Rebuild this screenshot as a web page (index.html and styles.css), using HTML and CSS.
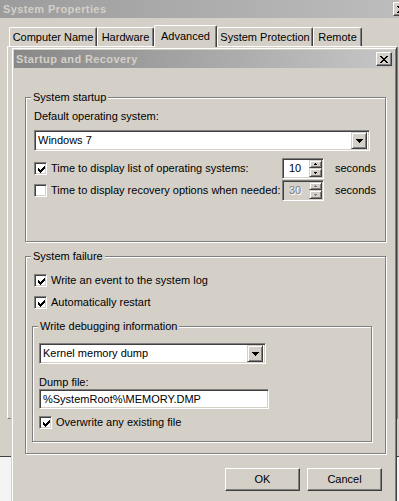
FILE: index.html
```html
<!DOCTYPE html>
<html lang="en">
<head>
  <meta charset="UTF-8" />
  <title>Startup and Recovery</title>
  <link rel="stylesheet" href="styles.css">
</head>
<body>
<div class="desktop">

  <div class="window back">
    <div class="caption">
      <span class="caption-text">System Properties</span>
      <span class="cap-btn">
        <svg width="8" height="7" viewBox="0 0 8 7"><path d="M0 0h2v1H0zM6 0h2v1H6zM1 1h2v1H1zM5 1h2v1H5zM2 2h4v1H2zM3 3h2v1H3zM2 4h4v1H2zM1 5h2v1H1zM5 5h2v1H5zM0 6h2v1H0zM6 6h2v1H6z"/></svg>
      </span>
    </div>
    <div class="tabs">
      <div class="tab tab-name">Computer Name</div>
      <div class="tab tab-hw">Hardware</div>
      <div class="tab tab-adv selected">Advanced</div>
      <div class="tab tab-sp">System Protection</div>
      <div class="tab tab-remote">Remote</div>
    </div>
    <div class="tabpanel"></div>
  </div>

  <div class="window dialog">
    <div class="caption">
      <span class="caption-text">Startup and Recovery</span>
      <span class="cap-btn">
        <svg width="8" height="7" viewBox="0 0 8 7"><path d="M0 0h2v1H0zM6 0h2v1H6zM1 1h2v1H1zM5 1h2v1H5zM2 2h4v1H2zM3 3h2v1H3zM2 4h4v1H2zM1 5h2v1H1zM5 5h2v1H5zM0 6h2v1H0zM6 6h2v1H6z"/></svg>
      </span>
    </div>

    <div class="client">
      <div class="group">
        <div class="group-title">System startup</div>
        <div class="label">Default operating system:</div>
        <div class="combo combo-os">
          <span class="combo-value">Windows 7</span>
          <span class="drop-btn"><svg width="7" height="4" viewBox="0 0 7 4"><path d="M0 0h7v1H0zM1 1h5v1H1zM2 2h3v1H2zM3 3h1v1H3z"/></svg></span>
        </div>
        <div class="opt-row first">
          <span class="check"><svg width="7" height="7" viewBox="0 0 7 7"><path d="M0 2h1v3H0zM1 3h1v3H1zM2 4h1v3H2zM3 3h1v3H3zM4 2h1v3H4zM5 1h1v3H5zM6 0h1v3H6z"/></svg></span>
          <span class="opt-label">Time to display list of operating systems:</span>
          <div class="spin">
            <span class="spin-value">10</span>
            <span class="spin-btns">
              <span class="spin-btn"><svg width="3" height="2" viewBox="0 0 3 2"><path d="M1 0h1v1H1zM0 1h3v1H0z"/></svg></span>
              <span class="spin-btn"><svg width="3" height="2" viewBox="0 0 3 2"><path d="M0 0h3v1H0zM1 1h1v1H1z"/></svg></span>
            </span>
          </div>
          <span class="unit">seconds</span>
        </div>
        <div class="opt-row">
          <span class="check"></span>
          <span class="opt-label">Time to display recovery options when needed:</span>
          <div class="spin disabled">
            <span class="spin-value">30</span>
            <span class="spin-btns">
              <span class="spin-btn"><svg width="3" height="2" viewBox="0 0 3 2"><path d="M1 0h1v1H1zM0 1h3v1H0z"/></svg></span>
              <span class="spin-btn"><svg width="3" height="2" viewBox="0 0 3 2"><path d="M0 0h3v1H0zM1 1h1v1H1z"/></svg></span>
            </span>
          </div>
          <span class="unit">seconds</span>
        </div>
      </div>

      <div class="group failure">
        <div class="group-title">System failure</div>
        <div class="opt-row first">
          <span class="check"><svg width="7" height="7" viewBox="0 0 7 7"><path d="M0 2h1v3H0zM1 3h1v3H1zM2 4h1v3H2zM3 3h1v3H3zM4 2h1v3H4zM5 1h1v3H5zM6 0h1v3H6z"/></svg></span>
          <span>Write an event to the system log</span>
        </div>
        <div class="opt-row">
          <span class="check"><svg width="7" height="7" viewBox="0 0 7 7"><path d="M0 2h1v3H0zM1 3h1v3H1zM2 4h1v3H2zM3 3h1v3H3zM4 2h1v3H4zM5 1h1v3H5zM6 0h1v3H6z"/></svg></span>
          <span>Automatically restart</span>
        </div>

        <div class="group inner">
          <div class="group-title">Write debugging information</div>
          <div class="combo combo-dump">
            <span class="combo-value">Kernel memory dump</span>
            <span class="drop-btn"><svg width="7" height="4" viewBox="0 0 7 4"><path d="M0 0h7v1H0zM1 1h5v1H1zM2 2h3v1H2zM3 3h1v1H3z"/></svg></span>
          </div>
          <div class="label dump-label">Dump file:</div>
          <div class="field">%SystemRoot%\MEMORY.DMP</div>
          <div class="opt-row overwrite">
            <span class="check"><svg width="7" height="7" viewBox="0 0 7 7"><path d="M0 2h1v3H0zM1 3h1v3H1zM2 4h1v3H2zM3 3h1v3H3zM4 2h1v3H4zM5 1h1v3H5zM6 0h1v3H6z"/></svg></span>
            <span>Overwrite any existing file</span>
          </div>
        </div>
      </div>

      <div class="buttons">
        <div class="btn">OK</div>
        <div class="btn">Cancel</div>
      </div>
    </div>
  </div>

</div>
</body>
</html>
```

FILE: styles.css
```css
body {
  margin: 0;
  background: #f4f4f4;
  font-family: "Liberation Sans", Arial, sans-serif;
  font-size: 11px;
  line-height: 13px;
  color: #000;
}

.desktop {
  position: relative;
  width: 399px;
  height: 501px;
  overflow: hidden;
}

.window {
  position: absolute;
  background: #d4d0c8;
  box-sizing: border-box;
}

/* caption bars */

.caption {
  display: flex;
  align-items: center;
  justify-content: space-between;
  height: 18px;
  color: #d4d0c8;
  font-weight: bold;
  letter-spacing: 0.4px;
}

.cap-btn {
  display: flex;
  align-items: center;
  justify-content: center;
  width: 16px;
  height: 14px;
  box-sizing: border-box;
  background: #d4d0c8;
  border: 1px solid;
  border-color: #fff #404040 #404040 #fff;
  box-shadow: inset -1px -1px #808080;
}

/* back window */

.back {
  left: 0;
  top: 0;
  width: 420px;
  height: 457px;
  border-bottom: 1px solid #404040;
}

.back .caption {
  padding: 0 11px 0 3px;
  background: linear-gradient(to right, #9c9c9c, #bebebe);
}

.tabs {
  display: flex;
  align-items: flex-end;
  height: 28px;
  padding-left: 9px;
}

.tab {
  box-sizing: border-box;
  height: 19px;
  padding-top: 3px;
  text-align: center;
  border-top: 1px solid #fff;
  border-left: 1px solid #fff;
  border-right: 1px solid #404040;
  border-radius: 2px 2px 0 0;
  box-shadow: inset -1px 0 #808080;
}

.tab.selected {
  position: relative;
  z-index: 1;
  height: 22px;
  margin-bottom: -1px;
  padding-top: 4px;
  background: #d4d0c8;
}

.tab-name { width: 88px; }
.tab-hw { width: 57px; }
.tab-adv { width: 63px; }
.tab-sp { width: 96px; }
.tab-remote { width: 49px; }

.tabpanel {
  box-sizing: border-box;
  width: 391px;
  height: 373px;
  margin-left: 7px;
  border-top: 1px solid #fff;
  border-left: 1px solid #fff;
  border-right: 1px solid #808080;
  border-bottom: 1px solid #808080;
}

/* dialog */

.dialog {
  left: 11px;
  top: 47px;
  width: 386px;
  height: 470px;
  padding: 2px;
  border: 1px solid;
  border-color: #d4d0c8 #404040 #404040 #d4d0c8;
  box-shadow: inset 1px 1px #fff, inset -1px -1px #808080;
}

.dialog .caption {
  padding: 0 2px;
  background: linear-gradient(to right, #888888, #c6c6c6);
}

.client {
  padding: 29px 0 0 11px;
}

.group {
  box-sizing: border-box;
  width: 361px;
  padding: 0 8px 40px 8px;
  border: 1px solid #808080;
  box-shadow: inset 1px 1px #fff, 1px 1px #fff;
}

.group-title {
  display: table;
  margin: -7px 0 0 -3px;
  padding: 0 2px;
  background: #d4d0c8;
}

.failure {
  margin-top: 14px;
  padding-bottom: 11px;
}

.inner {
  width: 340px;
  margin: 13px 0 0 -2px;
  padding: 0 6px 8px 6px;
}

.inner .group-title {
  margin-left: -1px;
}

.label {
  margin-top: 6px;
}

/* sunken fields */

.combo, .field, .spin, .check {
  box-sizing: border-box;
  background: #fff;
  border: 1px solid;
  border-color: #808080 #fff #fff #808080;
  box-shadow: inset 1px 1px #404040, inset -1px -1px #d4d0c8;
}

.combo {
  display: flex;
  align-items: center;
  height: 21px;
  padding: 2px;
}

.combo-os {
  width: 336px;
  margin-top: 7px;
}

.combo-dump {
  width: 227px;
  margin-top: 10px;
}

.combo-value {
  padding-left: 1px;
}

.drop-btn, .spin-btn {
  display: flex;
  align-items: center;
  justify-content: center;
  box-sizing: border-box;
  background: #d4d0c8;
  border: 1px solid;
  border-color: #d4d0c8 #404040 #404040 #d4d0c8;
  box-shadow: inset 1px 1px #fff, inset -1px -1px #808080;
}

.drop-btn {
  width: 16px;
  height: 17px;
  margin-left: auto;
}

svg {
  display: block;
  shape-rendering: crispEdges;
}

.dump-label {
  margin-top: 12px;
}

.field {
  width: 230px;
  height: 20px;
  padding: 3px 0 0 3px;
}

/* option rows */

.opt-row {
  display: flex;
  align-items: center;
  height: 21px;
  margin-top: 1px;
}

.opt-row.first {
  margin-top: 7px;
}

.opt-row.overwrite {
  margin-top: 3px;
}

.check {
  flex: none;
  width: 13px;
  height: 13px;
  margin-right: 4px;
  padding: 3px;
}

.opt-label {
  flex: none;
  width: 231px;
}

.spin {
  display: flex;
  align-items: center;
  width: 42px;
  height: 21px;
  padding: 2px 1px 2px 6px;
}

.spin-value {
  flex: 1;
}

.spin-btns {
  display: flex;
  flex-direction: column;
}

.spin-btn {
  width: 13px;
  height: 8px;
}

.spin-btn + .spin-btn {
  height: 9px;
}

.spin.disabled {
  background: #d4d0c8;
  color: #808080;
}

.spin.disabled .spin-value {
  text-shadow: 1px 1px #fff;
}

.spin.disabled svg {
  fill: #808080;
}

.unit {
  margin-left: 11px;
}

/* buttons */

.buttons {
  display: flex;
  justify-content: flex-end;
  gap: 7px;
  width: 361px;
  box-sizing: border-box;
  margin-top: 14px;
  padding-right: 4px;
}

.btn {
  box-sizing: border-box;
  width: 75px;
  height: 23px;
  padding-top: 4px;
  text-align: center;
  background: #d4d0c8;
  border: 1px solid;
  border-color: #fff #404040 #404040 #fff;
  box-shadow: inset -1px -1px #808080;
}
```
